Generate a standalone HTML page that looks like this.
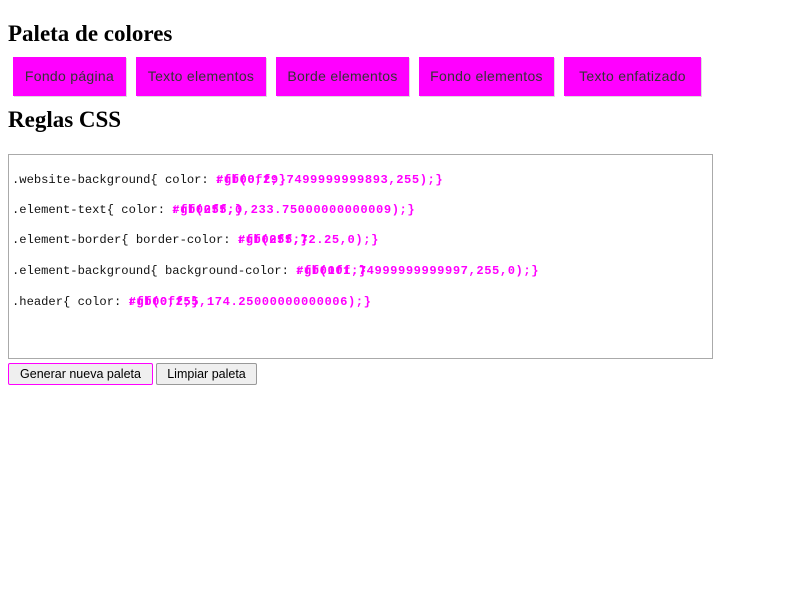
<!DOCTYPE html>
<html><head><meta charset="utf-8"><style>
html,body{margin:0;padding:0;background:#fff;width:800px;height:600px;overflow:hidden}
body{font-family:"Liberation Serif",serif;color:#000;position:relative}
h1{position:absolute;left:8px;margin:0;font-size:23px;font-weight:bold;line-height:26px}
.sw{position:absolute;top:57px;height:39px;background:#ff00ff;box-shadow:1px 1px 0 #ddd;font-family:"Liberation Sans",sans-serif;font-size:14px;font-weight:300;color:#333;line-height:39px;text-align:center;letter-spacing:0.3px}
.ta{position:absolute;left:8px;top:154px;width:703px;height:203px;border:1px solid #aaa}
.ln{position:absolute;left:12px;font-family:"Liberation Mono","DejaVu Sans Mono",monospace;font-size:12.15px;white-space:pre;color:#111;line-height:14px}
.m{color:#ff00ff;font-weight:bold;position:relative;letter-spacing:0.55px}
.o{position:absolute;left:0;top:0}
.btn{position:absolute;top:363px;height:20px;font-family:"Liberation Sans",sans-serif;font-size:12.5px;line-height:20px;background:#efefef;border:1px solid #999;border-radius:2px;text-align:center;box-sizing:content-box}
</style></head><body>
<h1 style="top:21px">Paleta de colores</h1>
<div class="sw" style="left:13px;width:113px">Fondo página</div>
<div class="sw" style="left:136px;width:130px">Texto elementos</div>
<div class="sw" style="left:276px;width:133px">Borde elementos</div>
<div class="sw" style="left:419px;width:135px">Fondo elementos</div>
<div class="sw" style="left:564px;width:137px">Texto enfatizado</div>
<h1 style="top:107px">Reglas CSS</h1>
<div class="ta"></div>
<div class="ln" style="top:173px">.website-background{ color: <span class="m">rgb(0,29.7499999999893,255);}<span class="o">#ff00ff;}</span></span></div>
<div class="ln" style="top:203px">.element-text{ color: <span class="m">rgb(255,0,233.75000000000009);}<span class="o">#ff00ff;}</span></span></div>
<div class="ln" style="top:233px">.element-border{ border-color: <span class="m">rgb(255,72.25,0);}<span class="o">#ff00ff;}</span></span></div>
<div class="ln" style="top:264px">.element-background{ background-color: <span class="m">rgb(101.74999999999997,255,0);}<span class="o">#ff00ff;}</span></span></div>
<div class="ln" style="top:295px">.header{ color: <span class="m">rgb(0,255,174.25000000000006);}<span class="o">#ff00ff;}</span></span></div>
<div class="btn" style="left:8px;width:143px;border-color:#ff00ff">Generar nueva paleta</div>
<div class="btn" style="left:156px;width:99px">Limpiar paleta</div>
</body></html>
